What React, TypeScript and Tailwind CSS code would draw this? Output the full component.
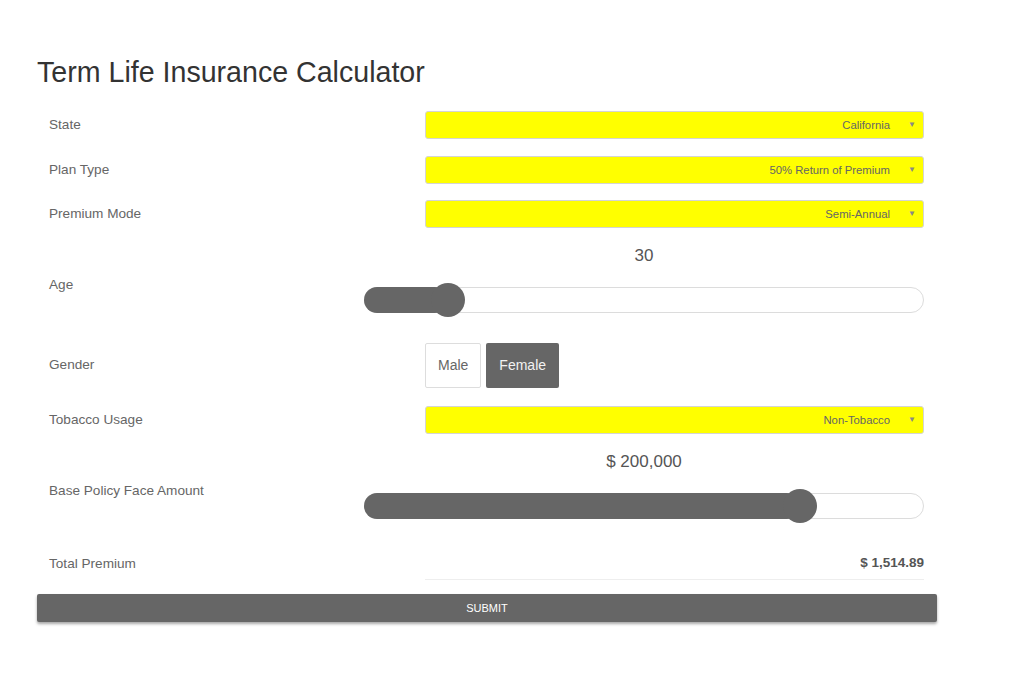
import React from "react";

const font = { fontFamily: '"Liberation Sans", Arial, sans-serif' };

const labelCls = "w-[327px] shrink-0 pl-3 text-[13.6px] text-[#666]";

function SelectRow({ label, value, className = "" }: { label: string; value: string; className?: string }) {
  return (
    <div className={`flex items-center ${className}`}>
      <div className={labelCls}>{label}</div>
      <div className="flex-1 mr-[13px] pl-[61px]">
        <div className="h-[28px] bg-[#ffff00] border border-[#d4d4d4] rounded-[3px] flex items-center justify-end text-[11.3px] text-[#666]">
          <span>{value}</span>
          <span className="w-[33px] text-right pr-[7px] text-[8px] text-[#888]">▼</span>
        </div>
      </div>
    </div>
  );
}

// slider: pos = thumb center in px from the track's left edge
function SliderRow({ label, value, pos, className = "" }: { label: string; value: string; pos: number; className?: string }) {
  return (
    <div className={`flex items-center ${className}`}>
      <div className={labelCls}>{label}</div>
      <div className="flex-1 mr-[13px] flex flex-col">
        <div className="h-[20px] leading-[20px] text-center text-[17px] text-[#555]">{value}</div>
        <div className="relative mt-[21px] mb-[11px] h-[26px] rounded-full border border-[#dcdcdc] bg-white">
          <div className="absolute left-[-1px] top-[-1px] bottom-[-1px] rounded-full bg-[#666]" style={{ width: pos }} />
          <div
            className="absolute top-1/2 -translate-y-1/2 w-[34px] h-[34px] rounded-full bg-[#666]"
            style={{ left: pos - 18 }}
          />
        </div>
      </div>
    </div>
  );
}

export default function App() {
  return (
    <div className="bg-white min-h-[685px] w-full" style={font}>
      <div className="w-[900px] ml-[37px] pt-[56px]">
        <h1 className="text-[28.6px] leading-[32px] text-[#333] font-normal">Term Life Insurance Calculator</h1>

        <SelectRow label="State" value="California" className="mt-[23px]" />
        <SelectRow label="Plan Type" value="50% Return of Premium" className="mt-[17px]" />
        <SelectRow label="Premium Mode" value="Semi-Annual" className="mt-[16px]" />

        <SliderRow label="Age" value="30" pos={84} className="mt-[18px]" />

        <div className="flex items-center mt-[19px]">
          <div className={labelCls}>Gender</div>
          <div className="flex-1 mr-[13px] pl-[61px] flex gap-[5px]">
            <button className="h-[45px] px-[12px] border border-[#ddd] rounded-[2px] bg-white text-[14px] text-[#666]">
              Male
            </button>
            <button className="h-[45px] px-[13px] rounded-[2px] bg-[#666] text-[14px] text-[#f2f2f2]">
              Female
            </button>
          </div>
        </div>

        <SelectRow label="Tobacco Usage" value="Non-Tobacco" className="mt-[18px]" />

        <SliderRow label="Base Policy Face Amount" value="$ 200,000" pos={436} className="mt-[18px]" />

        <div className="flex items-center mt-[18px]">
          <div className={labelCls}>Total Premium</div>
          <div className="flex-1 mr-[13px] ml-[61px] h-[32px] border-b border-[#eee] flex items-center justify-end text-[13.5px] font-bold text-[#555]">
            $ 1,514.89
          </div>
        </div>

        <button className="mt-[14px] w-full h-[28px] bg-[#666] rounded-[2px] text-white text-[11px] shadow-[0_2px_3px_rgba(0,0,0,0.35)]">
          SUBMIT
        </button>
      </div>
    </div>
  );
}
